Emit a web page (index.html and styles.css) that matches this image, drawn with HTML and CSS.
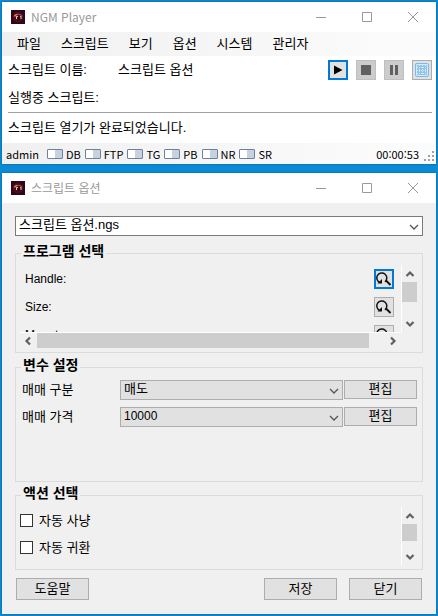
FILE: index.html
```html
<!DOCTYPE html>
<html lang="ko">
<head>
<meta charset="utf-8">
<meta name="viewport" content="width=device-width, initial-scale=1">
<title>NGM Player</title>
<link rel="stylesheet" href="styles.css">
</head>
<body>
<svg class="defs" aria-hidden="true">
  <defs>
    <symbol id="logo" viewBox="0 0 14 14">
      <rect width="14" height="14" fill="#2c0717"/>
      <circle cx="7" cy="7" r="5.500" fill="#4a0a22"/>
      <path d="M3.500 6.500Q4 4.500 6.500 4.500" fill="none" stroke="#e08a3c" stroke-width="1.500"/>
      <path d="M6.500 4.300Q10.500 4 11 6.500" fill="none" stroke="#8d4a78" stroke-width="1.200"/>
      <path d="M5 6.500h2M9 6.500h1.500" stroke="#e8b040" stroke-width="1"/>
      <path d="M5.500 7v2M10 7v2" stroke="#d8cdd0" stroke-width="1"/>
      <path d="M7 7h2v2.500H7z" fill="#160309"/>
    </symbol>
    <symbol id="min" viewBox="0 0 12 12"><path d="M1 6.500h10" stroke="#999" fill="none"/></symbol>
    <symbol id="max" viewBox="0 0 12 12"><path d="M1.500 1.500h9v9h-9z" stroke="#999" fill="none"/></symbol>
    <symbol id="close" viewBox="0 0 12 12"><path d="M1 1l10 10M11 1L1 11" stroke="#999" fill="none"/></symbol>
    <symbol id="chev" viewBox="0 0 10 10"><path d="M1 3l4 4 4-4" stroke="#555" stroke-width="1.300" fill="none"/></symbol>
    <symbol id="arrow" viewBox="0 0 10 10"><path d="M1.500 3l3.500 3.500L8.500 3" stroke="#606060" stroke-width="2.200" fill="none"/></symbol>
    <symbol id="search" viewBox="0 0 16 16">
      <path d="M3.800 11.500A5 5 0 1 1 9 10.800" fill="none" stroke="#111" stroke-width="1.500"/>
      <path d="M1.500 12.500h4.500V8z" fill="#111"/>
      <path d="M10 9.500l4.500 4.500" stroke="#111" stroke-width="2"/>
    </symbol>
  </defs>
</svg>
<main class="desktop">
  <section class="window">
    <header class="titlebar">
      <svg class="logo"><use href="#logo"/></svg>
      <h1>NGM Player</h1>
      <button class="cap" aria-label="최소화"><svg><use href="#min"/></svg></button>
      <button class="cap" aria-label="최대화"><svg><use href="#max"/></svg></button>
      <button class="cap" aria-label="닫기"><svg><use href="#close"/></svg></button>
    </header>
    <nav class="menu">
      <button>파일</button><button>스크립트</button><button>보기</button><button>옵션</button><button>시스템</button><button>관리자</button>
    </nav>
    <div class="info">
      <div class="line">
        <span class="key">스크립트 이름:</span><span class="grow">스크립트 옵션</span>
        <div class="tools">
          <button class="tool focus" aria-label="실행"><svg viewBox="0 0 16 16"><path d="M4 3.500l8.500 4.500-8.500 4.500z" fill="#000"/></svg></button>
          <button class="tool off" aria-label="정지" disabled><svg viewBox="0 0 16 16"><path d="M3 3h10v10H3z" fill="#606060"/></svg></button>
          <button class="tool off" aria-label="일시정지" disabled><svg viewBox="0 0 16 16"><path d="M4 3h3v10H4zM9 3h3v10H9z" fill="#606060"/></svg></button>
          <button class="tool" aria-label="표"><svg viewBox="0 0 16 16"><rect x="1.500" y="1.500" width="13" height="13" rx="1.500" fill="#d5ebfa" stroke="#7db8e8"/><path d="M3 3h10v10H3z" fill="#8cc4ee"/><path d="M3 5.500h10M3 8.500h10M5.500 3v10M8.500 3v10M11.500 3v10M3 11.500h10" stroke="#d5ebfa" stroke-dasharray="1 1"/></svg></button>
        </div>
      </div>
      <div class="line">실행중 스크립트:</div>
      <p class="message">스크립트 열기가 완료되었습니다.</p>
    </div>
    <footer class="status">
      <span class="user">admin</span>
      <span class="flag"><i></i>DB</span><span class="flag"><i></i>FTP</span><span class="flag"><i></i>TG</span><span class="flag"><i></i>PB</span><span class="flag"><i></i>NR</span><span class="flag"><i></i>SR</span>
      <time>00:00:53</time>
      <svg class="grip" viewBox="0 0 10 10"><path d="M8 0h2v2H8zM4 4h2v2H4zM8 4h2v2H8zM0 8h2v2H0zM4 8h2v2H4zM8 8h2v2H8z" fill="#a0a0a0"/></svg>
    </footer>
  </section>

  <section class="window options">
    <header class="titlebar">
      <svg class="logo"><use href="#logo"/></svg>
      <h1>스크립트 옵션</h1>
      <button class="cap" aria-label="최소화"><svg><use href="#min"/></svg></button>
      <button class="cap" aria-label="최대화"><svg><use href="#max"/></svg></button>
      <button class="cap" aria-label="닫기"><svg><use href="#close"/></svg></button>
    </header>
    <form class="form">
      <div class="combo white">
        <select aria-label="스크립트"><option>스크립트 옵션.ngs</option></select>
        <svg><use href="#chev"/></svg>
      </div>

      <fieldset class="program">
        <legend>프로그램 선택</legend>
        <div class="pane">
          <div class="view">
            <div class="row">Handle:<button type="button" class="tool focus" aria-label="Handle 찾기"><svg><use href="#search"/></svg></button></div>
            <div class="row">Size:<button type="button" class="tool" aria-label="Size 찾기"><svg><use href="#search"/></svg></button></div>
            <div class="row">Mount:<button type="button" class="tool" aria-label="Mount 찾기"><svg><use href="#search"/></svg></button></div>
          </div>
          <div class="vbar"><svg class="up"><use href="#arrow"/></svg><i></i><svg><use href="#arrow"/></svg></div>
          <div class="hbar"><svg class="left"><use href="#arrow"/></svg><i></i><svg class="right"><use href="#arrow"/></svg></div>
        </div>
      </fieldset>

      <fieldset class="vars">
        <legend>변수 설정</legend>
        <div class="var">
          <label for="kind">매매 구분</label>
          <div class="combo"><select id="kind"><option>매도</option></select><svg><use href="#chev"/></svg></div>
          <button type="button" class="btn">편집</button>
        </div>
        <div class="var">
          <label for="price">매매 가격</label>
          <div class="combo"><select id="price" class="number"><option>10000</option></select><svg><use href="#chev"/></svg></div>
          <button type="button" class="btn">편집</button>
        </div>
      </fieldset>

      <fieldset class="actions">
        <legend>액션 선택</legend>
        <div class="pane">
          <div class="view">
            <label class="check"><input type="checkbox">자동 사냥</label>
            <label class="check"><input type="checkbox">자동 귀환</label>
          </div>
          <div class="vbar"><svg class="up"><use href="#arrow"/></svg><i></i><svg><use href="#arrow"/></svg></div>
        </div>
      </fieldset>

      <div class="buttons">
        <button type="button" class="btn help">도움말</button>
        <button type="button" class="btn">저장</button>
        <button type="button" class="btn">닫기</button>
      </div>
    </form>
  </section>
</main>
</body>
</html>
```
FILE: styles.css
```css
* { box-sizing: border-box; }
body {
  margin: 0;
  min-height: 100vh;
  background: #0a8bd6;
  color: #000;
  font: 13px/20px "Liberation Sans", "Noto Sans CJK KR", sans-serif;
}
button, select, input { font: inherit; color: inherit; margin: 0; }
svg { display: block; }
.defs { position: absolute; width: 0; height: 0; }
.desktop {
  display: flex;
  flex-direction: column;
  gap: 9px;
  min-height: 100vh;
  padding: 2px;
}
.window { background: #fff; box-shadow: 0 0 2px #14557f; }
.options { flex: 1; display: flex; flex-direction: column; background: #f0f0f0; }

.titlebar { display: flex; align-items: center; height: 30px; padding-left: 9px; background: #fff; }
.logo { width: 14px; height: 14px; }
h1 {
  flex: 1;
  margin: 0 0 0 6px;
  font: 12px/20px "Noto Sans CJK KR", sans-serif;
  color: #999;
}
.cap { width: 46px; height: 30px; padding: 0; border: 0; background: none; display: grid; place-items: center; }
.cap svg { width: 12px; height: 12px; }

.menu { display: flex; height: 24px; padding-left: 5px; background: linear-gradient(90deg, #f0f0f0, #fcfcfc); }
.menu button { padding: 0 10px; border: 0; background: none; line-height: 22px; }

.info { padding: 0 4px 0 6px; }
.line { display: flex; align-items: center; height: 28px; }
.key { width: 110px; }
.grow { flex: 1; }
.tools { display: flex; gap: 8px; }
.tool {
  display: grid;
  place-items: center;
  width: 20px;
  height: 20px;
  padding: 0;
  border: 1px solid #adadad;
  background: #e1e1e1;
}
.tool svg { width: 16px; height: 16px; }
.tool.focus { border: 2px solid #0078d7; }
.tool.off { background: #ccc; border-color: #bfbfbf; }
.message { margin: 0; height: 31px; border-top: 1px solid #a0a0a0; line-height: 30px; }

.status {
  display: flex;
  align-items: center;
  height: 21px;
  padding: 0 2px 0 4px;
  background: linear-gradient(90deg, #f0f0f0, #fcfcfc);
  font: 11px/20px "Noto Sans CJK KR", sans-serif;
}
.user { width: 41px; }
.flag { display: flex; align-items: center; gap: 3px; margin-right: 4px; }
.flag i { width: 16px; height: 10px; border: 1px solid #6d819c; border-radius: 1px; background: linear-gradient(90deg, #fff 50%, #c8d1de 50%); }
time { margin-left: auto; }
.grip { align-self: flex-end; width: 10px; height: 10px; margin: 0 0 3px 5px; }

.form { flex: 1; display: flex; flex-direction: column; padding: 13px 13px 14px; }
.combo { position: relative; height: 20px; border: 1px solid #adadad; background: #e1e1e1; }
.combo.white { border-color: #7a7a7a; background: #fff; }
.combo select {
  display: block;
  appearance: none;
  width: 100%;
  height: 18px;
  padding: 0 20px 2px 3px;
  border: 0;
  border-radius: 0;
  background: none;
  line-height: 16px;
}
.combo .number { font-size: 12px; }
.combo svg { position: absolute; right: 3px; top: 5px; width: 10px; height: 10px; pointer-events: none; }

fieldset { min-width: 0; margin: 0; padding: 0 5px 0 4px; border: 1px solid #dcdcdc; }
legend { height: 16px; margin-left: 1px; padding: 0 2px; font-size: 14px; font-weight: bold; line-height: 13px; }
.program { height: 108px; margin-top: 9px; }
.vars { height: 123px; margin-top: 6px; }
.actions { height: 83px; margin-top: 5px; }

.pane { display: grid; grid-template-columns: 1fr 16px; }
.program .pane { padding-top: 4px; grid-template-rows: 67px 16px; }
.view { min-width: 0; overflow: hidden; }
.row { display: flex; align-items: center; justify-content: space-between; height: 28px; padding: 0 7px 0 5px; font-size: 12px; }
.vbar { display: flex; flex-direction: column; align-items: center; justify-content: space-between; padding: 4px 0 3px; border-left: 1px solid #fff; }
.vbar svg, .hbar svg { flex: none; width: 10px; height: 10px; }
.vbar i { width: 15px; height: 20px; margin-bottom: 15px; background: #cdcdcd; }
.hbar { display: flex; align-items: center; gap: 4px; padding: 0 3px; border-top: 1px solid #fff; }
.hbar i { flex: 1; height: 15px; margin-right: 15px; background: #cdcdcd; }
.up { transform: rotate(180deg); }
.left { transform: rotate(90deg); }
.right { transform: rotate(-90deg); }

.var { display: grid; grid-template-columns: 97px 1fr 73px; align-items: center; column-gap: 1px; height: 27px; padding-left: 2px; }
.vars .var:nth-of-type(1) { margin-top: 1px; }
.btn { height: 19px; padding: 0 0 2px; border: 1px solid #adadad; background: #e1e1e1; line-height: 15px; }

.actions .pane { padding-top: 4px; grid-template-rows: 58px; }
.actions .vbar i { height: 17px; margin-bottom: 8px; }
.check { display: flex; align-items: center; gap: 6px; height: 27px; }
.check input { appearance: none; width: 13px; height: 13px; border: 1px solid #333; background: #fff; }

.buttons { display: flex; gap: 12px; margin-top: 8px; padding: 0 1px; }
.buttons .btn { width: 73px; height: 22px; }
.buttons .help { margin-right: auto; }
```
